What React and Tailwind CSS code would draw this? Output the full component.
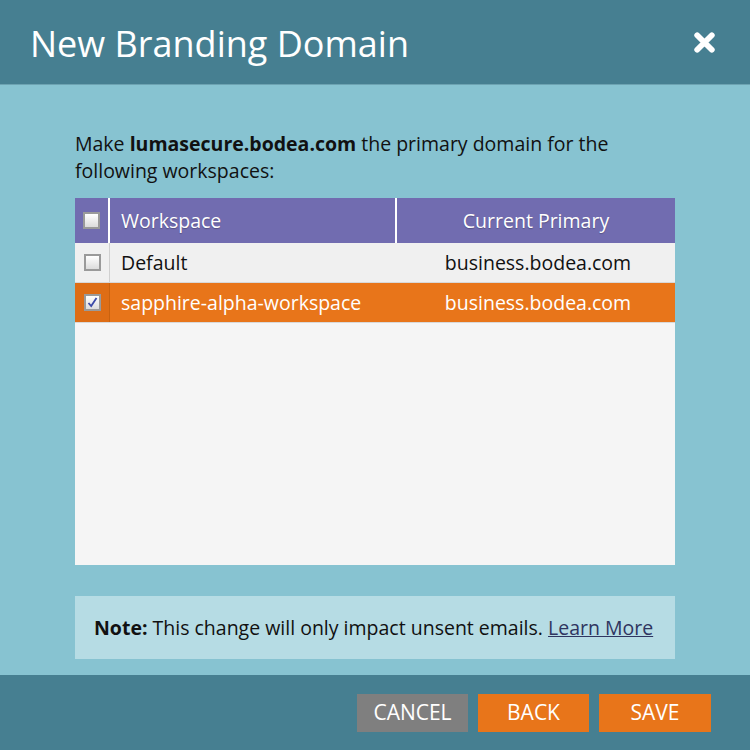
import { useState } from "react";

const font = { fontFamily: '"Open Sans", "Liberation Sans", sans-serif' };

const Box = ({ checked }) => (
  <span className="flex h-[17px] w-[17px] items-center justify-center border-2 border-[#9a9a9a] bg-gradient-to-b from-[#ffffff] to-[#dcdcdc]">
    {checked && (
      <svg width="11" height="11" viewBox="0 0 11 11">
        <path d="M1.5 6 L4.2 9 L9.5 1" fill="none" stroke="#3b4aa8" strokeWidth="1.8" />
      </svg>
    )}
  </span>
);

const rows = [
  { name: "Default", primary: "business.bodea.com", checked: false },
  { name: "sapphire-alpha-workspace", primary: "business.bodea.com", checked: true },
];

export default function App() {
  const [items] = useState(rows);

  return (
    <div style={font} className="flex h-[750px] w-[750px] flex-col bg-[#87c3d1]">
      <div className="flex h-[85px] shrink-0 items-center justify-between border-b border-[#6da3b2] bg-[#467f91] pl-[30px] pr-[34px]">
        <h1 className="mt-[3px] text-[36px] leading-none text-white">New Branding Domain</h1>
        <svg width="23" height="23" viewBox="0 0 22 22">
          <path d="M4 4 L18 18 M18 4 L4 18" stroke="#fff" strokeWidth="5.5" strokeLinecap="round" />
        </svg>
      </div>

      <div className="flex flex-1 flex-col px-[75px] pt-[45px]">
        <p className="text-[19.5px] leading-[27px] text-[#111]">
          Make <b className="font-bold">lumasecure.bodea.com</b> the primary domain for the following workspaces:
        </p>

        <div className="mt-[14px] flex h-[367px] flex-col bg-[#f5f5f5]">
          <div className="flex h-[45px] shrink-0 bg-[#716cb0] text-[19.5px] text-white [text-shadow:0_1px_1px_rgba(0,0,0,0.25)]">
            <div className="flex w-[35px] items-center justify-center border-r-2 border-white">
              <Box />
            </div>
            <div className="flex w-[287px] items-center border-r-2 border-white pl-[11px]">Workspace</div>
            <div className="flex flex-1 items-center justify-center">Current Primary</div>
          </div>
          {items.map((r) => (
            <div
              key={r.name}
              className={`flex h-[40px] border-b border-[#d8d8d8] text-[19.5px] ${
                r.checked ? "bg-[#e8751a] text-white" : "bg-[#f0f0f0] text-[#111]"
              }`}
            >
              <div
                className={`flex w-[35px] items-center justify-center border-r ${
                  r.checked ? "border-[#c9620f] bg-[#de6d15]" : "border-[#d0d0d0]"
                }`}
              >
                <Box checked={r.checked} />
              </div>
              <div className="flex w-[291px] items-center pl-[11px]">{r.name}</div>
              <div className="flex flex-1 items-center justify-center">{r.primary}</div>
            </div>
          ))}
        </div>

        <div className="mt-[31px] flex h-[63px] items-center bg-[#b6dce4] px-[19px] text-[19.5px] text-[#111]">
          <span>
            <b className="font-bold">Note:</b> This change will only impact unsent emails.{" "}
            <a href="#" className="text-[#2f3560] underline">Learn More</a>
          </span>
        </div>
      </div>

      <div className="flex h-[75px] shrink-0 items-center justify-end gap-[10px] bg-[#467f91] pr-[39px]">
        <button className="h-[38px] w-[111px] bg-[#7f7f7f] text-[21px] text-white">CANCEL</button>
        <button className="h-[38px] w-[111px] bg-[#e8751a] text-[21px] text-white">BACK</button>
        <button className="h-[38px] w-[112px] bg-[#e8751a] text-[21px] text-white">SAVE</button>
      </div>
    </div>
  );
}
